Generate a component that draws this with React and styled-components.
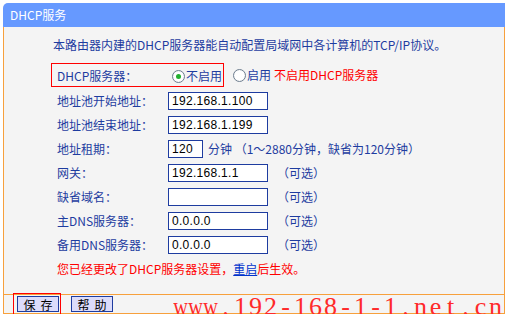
import styled, { createGlobalStyle } from "styled-components";

const GlobalStyle = createGlobalStyle`
  html, body {
    margin: 0;
    padding: 0;
    background: #ffffff;
  }
  body {
    font-family: "Noto Sans CJK SC", sans-serif;
    font-size: 12px;
  }
`;

const Panel = styled.div`
  position: relative;
  width: 502px;
  margin: 3px 0 0 3px;
`;

const Header = styled.div`
  height: 24px;
  background: #6699ff;
  border-top-left-radius: 5px;
  color: #ffffff;
  padding-left: 7px;
  display: flex;
  align-items: center;
  font-size: 12px;
  line-height: 14px;
`;

const Body = styled.div`
  height: 256px;
  background: #f4f4f4;
  border-left: 1px solid #f7a03c;
  border-right: 1px solid #f7a03c;
  padding-top: 11px;
  color: #1e3ca0;
  line-height: 14px;
`;

const Intro = styled.div`
  margin-left: 49px;
  height: 14px;
`;

const Form = styled.div`
  margin: 11px 0 0 47px;
  display: flex;
  flex-direction: column;
`;

const TopRow = styled.div`
  display: flex;
  align-items: center;
  height: 24px;
  margin-bottom: 2px;
`;

const Highlight = styled.div`
  box-sizing: border-box;
  width: 173px;
  height: 24px;
  border: 1px solid #ff0000;
  padding: 2px 0 0 5px;
  display: flex;
  align-items: center;
  white-space: nowrap;
`;

const Row = styled.div`
  display: flex;
  align-items: center;
  height: 24px;
  padding-left: 6px;
  white-space: nowrap;
`;

const Label = styled.span`
  width: 111px;
  flex: none;
`;

const Radio = styled.span`
  display: flex;
  align-items: center;
  flex: none;
  white-space: nowrap;
  margin-left: ${(p) => p.$gap || 0}px;
`;

const Dot = styled.span`
  box-sizing: border-box;
  width: 13px;
  height: 13px;
  flex: none;
  border-radius: 50%;
  border: 1px solid #6f7f90;
  background: radial-gradient(circle, #ffffff 55%, #dfe3e8 100%);
  margin-right: 1px;
  display: flex;
  align-items: center;
  justify-content: center;

  &::after {
    content: "";
    width: 5px;
    height: 5px;
    border-radius: 50%;
    background: ${(p) => (p.$on ? "#22b030" : "transparent")};
  }
`;

const Note = styled.span`
  color: #ff0000;
  margin-left: ${(p) => p.$gap || 0}px;
`;

const Field = styled.div`
  box-sizing: border-box;
  flex: none;
  width: ${(p) => p.$w || 100}px;
  height: 18px;
  border: 1px solid #1e3ca0;
  background: #ffffff;
  color: #000000;
  font-family: "Liberation Sans", sans-serif;
  font-size: 12px;
  line-height: 16px;
  padding-left: 3px;
  letter-spacing: 0.3px;
`;

const Aside = styled.span`
  margin-left: ${(p) => p.$gap || 9}px;
`;

const Message = styled.div`
  color: #ff0000;
  padding-left: 6px;
  height: 24px;
  display: flex;
  align-items: center;
`;

const Link = styled.span`
  color: #0033cc;
  text-decoration: underline;
`;

const Footer = styled.div`
  box-sizing: border-box;
  height: 20px;
  background: #f4f4f4;
  border: 1px solid #f7a03c;
  display: flex;
  align-items: center;
  gap: 12px;
  padding-left: 13px;
`;

const Button = styled.span`
  position: relative;
  box-sizing: border-box;
  width: 42px;
  height: 16px;
  background: #dcdcfa;
  border: 1px solid #1e3ca0;
  color: #000000;
  display: flex;
  align-items: center;
  justify-content: center;
  font-size: 12px;
  letter-spacing: 5px;
  padding-left: 5px;

  ${(p) =>
    p.$marked &&
    `
    &::after {
      content: "";
      position: absolute;
      top: -4px;
      left: -5px;
      right: -3px;
      bottom: -7px;
      border: 1px solid #ff0000;
    }
  `}
`;

const Watermark = styled.div`
  position: absolute;
  left: 170px;
  top: 291px;
  display: flex;
  color: #ff2a2a;
  font-family: "Liberation Serif", serif;
  font-size: 26px;
  line-height: 26px;
  pointer-events: none;
`;

const Cell = styled.span`
  width: 15px;
  display: flex;
  justify-content: center;
  transform: ${(p) => (p.$wide ? "scaleX(0.78)" : "none")};
`;

const fields = [
  { label: "地址池开始地址：", value: "192.168.1.100" },
  { label: "地址池结束地址：", value: "192.168.1.199" },
  { label: "地址租期：", value: "120", lease: true },
  { label: "网关：", value: "192.168.1.1", optional: true },
  { label: "缺省域名：", value: "", optional: true },
  { label: "主DNS服务器：", value: "0.0.0.0", optional: true },
  { label: "备用DNS服务器：", value: "0.0.0.0", optional: true },
];

export default function App() {
  return (
    <>
      <GlobalStyle />
      <Panel>
        <Header>DHCP服务</Header>
        <Body>
          <Intro>本路由器内建的DHCP服务器能自动配置局域网中各计算机的TCP/IP协议。</Intro>
          <Form>
            <TopRow>
              <Highlight>
                <Label>DHCP服务器：</Label>
                <Radio $gap={4}>
                  <Dot $on />
                  不启用
                </Radio>
              </Highlight>
              <Radio $gap={9}>
                <Dot />
                启用
              </Radio>
              <Note $gap={3}>不启用DHCP服务器</Note>
            </TopRow>
            {fields.map((f) => (
              <Row key={f.label}>
                <Label>{f.label}</Label>
                <Field $w={f.lease ? 35 : 100}>{f.value}</Field>
                {f.lease && <Aside $gap={5}>分钟 （1～2880分钟，缺省为120分钟）</Aside>}
                {f.optional && <Aside>（可选）</Aside>}
              </Row>
            ))}
            <Message>
              您已经更改了DHCP服务器设置，<Link>重启</Link>后生效。
            </Message>
          </Form>
        </Body>
        <Footer>
          <Button $marked>保存</Button>
          <Button>帮助</Button>
        </Footer>
        <Watermark>
          {"www.192-168-1-1.net.cn".split("").map((c, i) => (
            <Cell key={i} $wide={c === "w"}>
              {c}
            </Cell>
          ))}
        </Watermark>
      </Panel>
    </>
  );
}
